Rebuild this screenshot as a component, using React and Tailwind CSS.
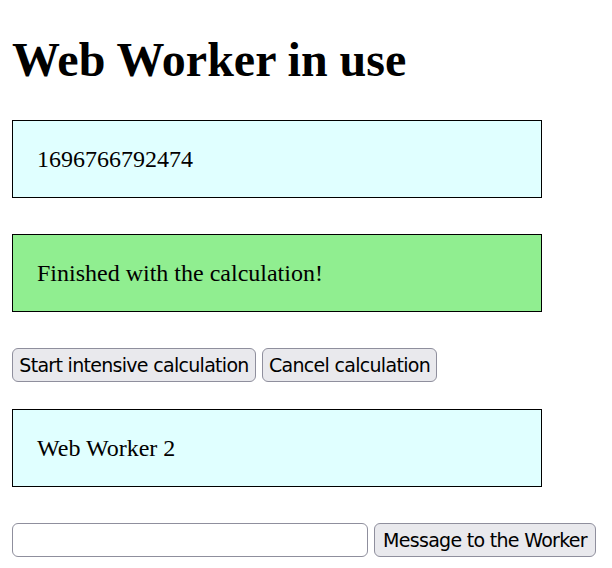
import React, { useState } from 'react';

const serif = { fontFamily: '"Liberation Serif", "Times New Roman", serif' };

const Box = ({ color, children }) => (
  <div
    className={`w-[530px] border border-black px-[24px] py-[24px] text-[24px] leading-[28px] text-black ${color}`}
  >
    {children}
  </div>
);

const btn =
  'h-[34px] rounded-[6px] border border-[#8f8f9d] bg-[#e9e9ed] px-[4px] text-[19px] tracking-[-0.7px] leading-[22px] text-black font-["DejaVu_Sans",sans-serif] whitespace-nowrap';

const App = () => {
  const [msg, setMsg] = useState('');

  return (
    <div className="px-[12px] pt-[32px] pb-[12px] bg-white min-h-[568px]" style={serif}>
      <h1 className="mb-[32px] text-[48px] font-bold leading-[56px] text-black">Web Worker in use</h1>

      <Box color="bg-[#e0ffff]">1696766792474</Box>

      <div className="mt-[36px]">
        <Box color="bg-[#90ee90]">Finished with the calculation!</Box>
      </div>

      <div className="mt-[36px] flex gap-[6px]">
        <button className={`${btn} w-[244px]`}>Start intensive calculation</button>
        <button className={`${btn} w-[175px]`}>Cancel calculation</button>
      </div>

      <div className="mt-[27px]">
        <Box color="bg-[#e0ffff]">Web Worker 2</Box>
      </div>

      <div className="mt-[36px] flex gap-[6px]">
        <input
          value={msg}
          onChange={(e) => setMsg(e.target.value)}
          className="h-[34px] w-[356px] rounded-[6px] border border-[#8f8f9d] bg-white px-[4px] text-[19px]"
        />
        <button className={`${btn} w-[222px]`}>Message to the Worker</button>
      </div>
    </div>
  );
};

export default App;
